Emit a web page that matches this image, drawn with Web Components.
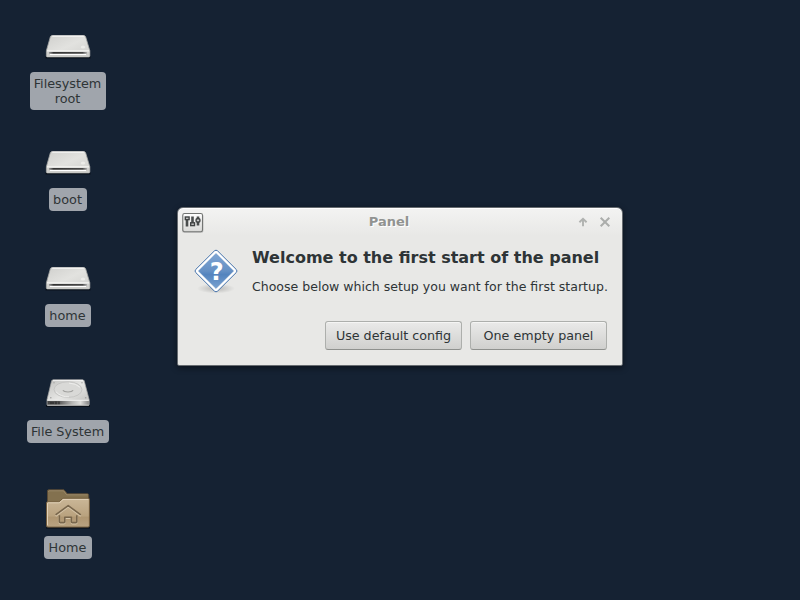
<!DOCTYPE html>
<html lang="en">
<head>
<meta charset="utf-8">
<title>Desktop</title>
<style>
html,body{margin:0;height:100%;overflow:hidden;background:#152233}
body{font:12.7px/15px "DejaVu Sans",sans-serif;color:#2e3436}
</style>
</head>
<body>
<desk-top>
  <desk-icon kind="drive" label="Filesystem root" style="--w:76px"></desk-icon>
  <desk-icon kind="drive" label="boot" style="--w:38px"></desk-icon>
  <desk-icon kind="drive" label="home" style="--w:46px"></desk-icon>
  <desk-icon kind="disk" label="File System" style="--w:82px"></desk-icon>
  <desk-icon kind="folder" label="Home" style="--w:48px"></desk-icon>
  <app-window slot="window" heading="Panel">
    <message-box>
      <span slot="title">Welcome to the first start of the panel</span>
      <span slot="text">Choose below which setup you want for the first startup.</span>
    </message-box>
    <push-button slot="actions">Use default config</push-button>
    <push-button slot="actions">One empty panel</push-button>
  </app-window>
</desk-top>
<script>
const define = (name, html, setup) => customElements.define(name, class extends HTMLElement {
  constructor() {
    super();
    this.attachShadow({mode: "open"}).innerHTML = html;
  }
  connectedCallback() { if (setup) setup(this, this.shadowRoot); }
});

const icons = {
  drive: `<svg width="48" height="48" viewBox="0 0 48 48">
    <defs><linearGradient id="a" x1="0" y1="0" x2="1" y2="1"><stop offset="0" stop-color="#d0d0cd"/><stop offset=".5" stop-color="#e2e2df"/><stop offset="1" stop-color="#d0d0cd"/></linearGradient>
    <linearGradient id="s" x1="0" x2="1"><stop offset="0" stop-color="#999"/><stop offset=".12" stop-color="#333"/><stop offset=".88" stop-color="#484848"/><stop offset="1" stop-color="#aaa"/></linearGradient></defs>
    <path d="M1.5 35.6h45" stroke="#080d14" stroke-width="2" opacity=".75"/>
    <path d="M8.3 13.5h31.4q1.4 0 1.9 1.2l4.2 14v5.2q0 1-1 1H3.4q-1 0-1-1v-5.2L6.4 14.7q.5-1.2 1.9-1.2z" fill="url(#a)" stroke="#a8a9a7" stroke-width=".8"/>
    <path d="M8.2 14.1h31.6" stroke="#fff" stroke-width="1"/>
    <path d="M3 29h42.3v5q0 .4-.5.4H3.5q-.5 0-.5-.4z" fill="#cfcfcc"/>
    <path d="M3 28.8h42.2" stroke="#f4f4f2" stroke-width="1.2"/>
    <rect x="5" y="30" width="38" height="1.7" fill="url(#s)"/>
    <path d="M6 32.5h36" stroke="#fff" stroke-width="1.2"/>
    <ellipse cx="39" cy="25" rx="2.2" ry="1.5" fill="#ecece9"/>
  </svg>`,
  disk: `<svg width="48" height="48" viewBox="0 0 48 48">
    <defs><linearGradient id="a" x1="0" y1="0" x2="1" y2="1"><stop offset="0" stop-color="#c2c2c0"/><stop offset=".5" stop-color="#e6e6e4"/><stop offset="1" stop-color="#bcbcba"/></linearGradient>
    <linearGradient id="f" x1="0" x2="1"><stop offset="0" stop-color="#444"/><stop offset=".25" stop-color="#505050"/><stop offset=".6" stop-color="#b8b8b6"/><stop offset=".8" stop-color="#dededc"/><stop offset="1" stop-color="#858585"/></linearGradient></defs>
    <path d="M2 36h44" stroke="#080d14" stroke-width="2" opacity=".8"/>
    <path d="M9.3 9.8h29.2q1.2 0 1.7 1l5 18.9v4.8q0 1-1 1H4q-1 0-1-1v-4.8L7.6 10.8q.5-1 1.7-1z" fill="url(#a)" stroke="#a4a4a2" stroke-width=".7"/>
    <path d="M9 10.4h30" stroke="#fff" stroke-width=".8"/>
    <ellipse cx="24" cy="19.6" rx="14" ry="7.8" fill="#d9d9d7" stroke="#bcbcba" stroke-width=".7"/>
    <path d="M12 21.8q5 5.3 13 5M36 17.3q-4-4-11-4.2" fill="none" stroke="#f2f2f1" stroke-width=".8"/>
    <path d="M18.9 20.3q1 1.7 5.1 1.7t5.1-1.7" fill="none" stroke="#a0a09e" stroke-width="1.1"/>
    <g fill="#a2a2a0"><circle cx="10" cy="12.7" r=".7"/><circle cx="38" cy="12.7" r=".7"/><circle cx="6.8" cy="27.8" r=".8"/><circle cx="41.7" cy="27.8" r=".8"/></g>
    <path d="M3.3 30.5h41.5V35H3.3z" fill="url(#f)"/>
    <path d="M3.3 30.3h41.5" stroke="#f4f4f3" stroke-width="1"/>
    <path d="M6 33h4M12 31.5v3M15 31.5v3" stroke="#242424"/>
    <path d="M3.3 35h41.5" stroke="#c9c9c7" stroke-width=".7"/>
  </svg>`,
  folder: `<svg width="48" height="48" viewBox="0 1.2 48 48">
    <defs><linearGradient id="a" x1="0" y1="0" x2="0" y2="1"><stop offset="0" stop-color="#cab798"/><stop offset=".62" stop-color="#b9a27e"/><stop offset=".65" stop-color="#af9671"/><stop offset="1" stop-color="#b9a382"/></linearGradient></defs>
    <path d="M2 43.2h44" stroke="#080d14" stroke-width="1.5" opacity=".7"/>
    <path d="M3.5 25V6.2q0-1.2 1.2-1.2h15.3l3.2 4h20.3q1.2 0 1.2 1.2V25z" fill="#83714f" stroke="#594a35"/>
    <path d="M4.5 6.8q0-.8.8-.8H19.5l3.2 4h21" fill="none" stroke="#a28f70" stroke-width=".8"/>
    <path d="M2.5 18.2q0-1.2 1.2-1.2h10.6q1 0 1.8-.8l1.8-1.9q.7-.8 1.8-.8h24.4q1.3 0 1.3 1.3v26.2q0 1.3-1.3 1.3H3.8q-1.3 0-1.3-1.3z" fill="url(#a)" stroke="#705a3b"/>
    <path d="M3.5 18.7q0-.7.7-.7h10.2q1.5 0 2.6-1.2l1.3-1.4q.7-.8 1.7-.8h24.4M3.5 18.5v22" fill="none" stroke="#e4d6bd" stroke-width=".9"/>
    <g fill="none" stroke-linejoin="round" stroke-width="1.6"><path d="M11.6 31.2L24.2 21.9l12.6 9.3M15.4 31.6v6.4q0 .9.9.9h3.6q.9 0 .9-.9v-4.5h6.6v4.5q0 .9.9.9h3.6q.9 0 .9-.9v-6.4" stroke="#d6c5a8"/>
    <path d="M11.6 30.1L24.2 20.8l12.6 9.3M15.4 30.5v6.4q0 .9.9.9h3.6q.9 0 .9-.9v-4.5h6.6v4.5q0 .9.9.9h3.6q.9 0 .9-.9v-6.4" stroke="#78664c"/></g>
  </svg>`
};

define("desk-top", `<style>
  :host{display:block;position:relative;width:800px;height:600px;background:#152233;overflow:hidden}
  .icons{display:grid;grid-template-columns:136px;grid-auto-rows:116px;padding-top:22px}
  .layer{position:absolute;left:177px;top:207px}
</style><div class="icons"><slot></slot></div><div class="layer"><slot name="window"></slot></div>`);

define("desk-icon", `<style>
  :host{display:flex;flex-direction:column;align-items:center;gap:2px}
  .pic{height:48px} svg{display:block}
  .label{box-sizing:border-box;width:var(--w);padding:4px 1px 4px 0;border-radius:4px;background:#a0a5ac;color:#2e3436;text-align:center;font-size:12.8px}
</style><div class="pic"></div><div class="label"></div>`, (el, root) => {
  root.querySelector(".pic").innerHTML = icons[el.getAttribute("kind")];
  root.querySelector(".label").textContent = el.getAttribute("label");
});

define("title-bar", `<style>
  :host{display:grid;grid-template-columns:30px 1fr 52px;align-items:center;height:28px}
  .menu{margin-left:4px;margin-top:1px} svg{display:block}
  .name{text-align:center;font-weight:bold;font-size:13px;line-height:15px;margin-bottom:1px;color:#919391;text-shadow:1px 1px #fff}
  .tools{display:flex;justify-content:flex-end;gap:10px;padding-right:11px}
</style>
<svg class="menu" width="22" height="22" viewBox="0 0 22 22">
  <defs><linearGradient id="m" x2="0" y2="1"><stop stop-color="#fff"/><stop offset="1" stop-color="#d9d9d7"/></linearGradient></defs>
  <rect x="0" y="2" width="21.5" height="19" rx="2.5" fill="#999" opacity=".4"/>
  <rect x=".8" y="1.5" width="19.7" height="18.2" rx="1.7" fill="url(#m)" stroke="#737573" stroke-width="1.1"/>
  <path d="M5 6v8.5M10.5 4.5v9M16 4.5v9" stroke="#4a4d4d" stroke-width="2.6"/>
  <rect x="3.3" y="5" width="3.8" height="2.6" fill="#ccc" stroke="#404343" stroke-width="1.4"/>
  <rect x="8.7" y="10.8" width="3.8" height="2.8" fill="#ccc" stroke="#404343" stroke-width="1.4"/>
  <rect x="14.1" y="6.8" width="3.8" height="3.2" rx="1" fill="#ccc" stroke="#404343" stroke-width="1.4"/>
</svg>
<div class="name"><slot></slot></div>
<div class="tools">
  <svg width="12" height="12" viewBox="0 0 12 12"><path d="M6 10.3V3.2M2.4 6.3L6 2.8l3.6 3.5" fill="none" stroke="#b0b2b0" stroke-width="1.9"/></svg>
  <svg width="12" height="12" viewBox="0 0 12 12"><path d="M1.7 1.7l8.6 8.6M10.3 1.7l-8.6 8.6" stroke="#abadab" stroke-width="2"/></svg>
</div>`);

define("app-window", `<style>
  :host{display:flex;flex-direction:column;box-sizing:border-box;width:446px;height:159px;border:1px solid #666b70;border-radius:6px 6px 2px 2px;background:linear-gradient(#f3f3f2,#e8e8e6 28px);box-shadow:inset 0 1px #fff,0 2px 6px rgba(0,0,0,.45)}
  .body{flex:1}
  .actions{display:flex;justify-content:flex-end;gap:8px;padding:0 15px 15px}
</style><title-bar></title-bar><div class="body"><slot></slot></div><div class="actions"><slot name="actions"></slot></div>`, (el, root) => {
  root.querySelector("title-bar").textContent = el.getAttribute("heading");
});

define("message-box", `<style>
  :host{display:flex;gap:12px;padding:12px 0 0 14px;white-space:nowrap}
  svg{display:block;flex:none}
  .title{font-weight:bold;font-size:16px;line-height:20px}
  .text{margin-top:11px;font-size:12.54px}
  text{font:bold 24px "DejaVu Sans",sans-serif}
</style>
<svg width="48" height="48" viewBox="0 0 48 48">
  <defs><linearGradient id="b" x2="0" y2="1"><stop stop-color="#7ea5d3"/><stop offset=".5" stop-color="#6590c4"/><stop offset=".6" stop-color="#5484be"/><stop offset="1" stop-color="#78a1d0"/></linearGradient>
  <radialGradient id="c"><stop stop-opacity=".22"/><stop offset="1" stop-opacity="0"/></radialGradient></defs>
  <ellipse cx="24" cy="40.5" rx="19" ry="5" fill="url(#c)"/>
  <path d="M22.4 2.9q1.6-1.5 3.2 0L44.2 21.4q1.6 1.6 0 3.2L25.6 43.1q-1.6 1.5-3.2 0L3.8 24.6q-1.6-1.6 0-3.2z" fill="#fff" stroke="#4472ab"/>
  <path d="M24 5.4L41.6 23 24 40.6 6.4 23z" fill="url(#b)" stroke="#5b88be" stroke-width=".4"/>
  <text x="24.6" y="31.7" text-anchor="middle" fill="#fff">?</text>
</svg>
<div><div class="title"><slot name="title"></slot></div><div class="text"><slot name="text"></slot></div></div>`);

define("push-button", `<style>
  :host{display:flex;align-items:center;justify-content:center;box-sizing:border-box;width:137px;height:29px;border:1px solid #adafac;border-bottom-color:#8f918e;border-radius:3px;background:linear-gradient(#eaeae9,#d0d0ce);box-shadow:inset 0 1px #f5f5f4;white-space:nowrap}
</style><slot></slot>`);
</script>
</body>
</html>
